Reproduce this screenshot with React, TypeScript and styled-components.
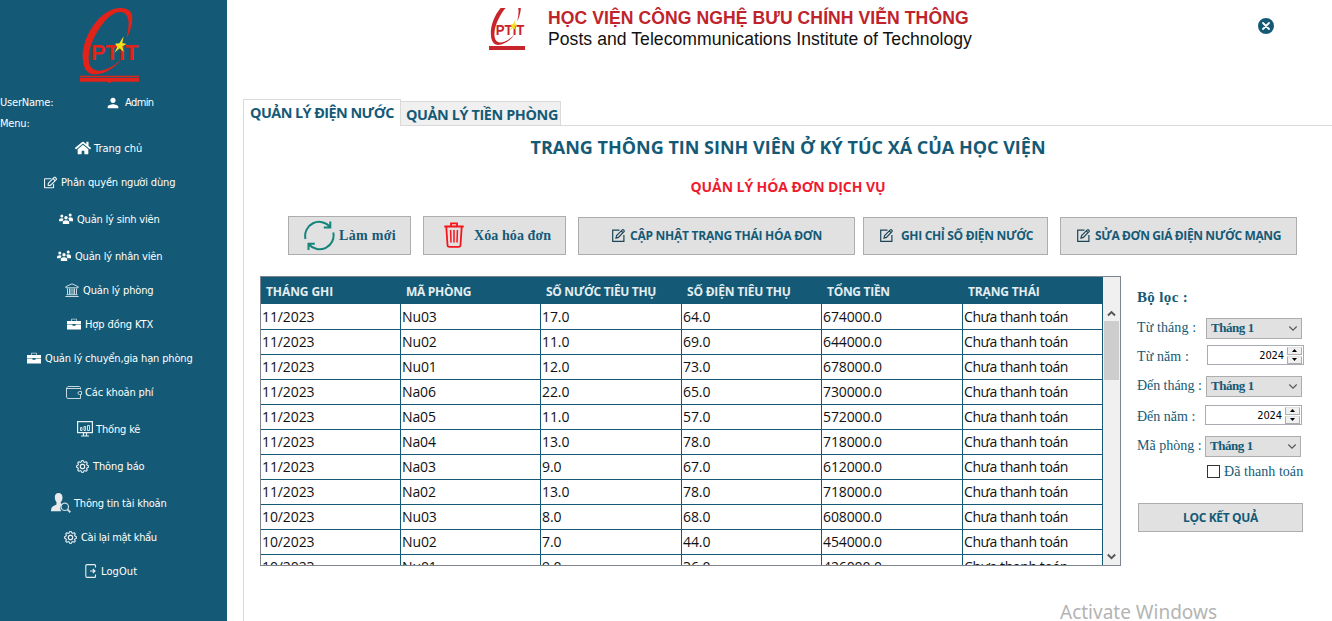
import React from 'react';
import styled, { createGlobalStyle } from 'styled-components';
import { FaHome, FaRegEdit } from 'react-icons/fa';
import { MdPerson } from 'react-icons/md';
import { BsGear } from 'react-icons/bs';

const teal = '#145a76';
const ui = '"Open Sans", "Noto Sans", sans-serif';
const serif = '"Liberation Serif", "Times New Roman", serif';
const condensed = '"DejaVu Sans Condensed", "DejaVu Sans", sans-serif';

const Global = createGlobalStyle`
  * { box-sizing: border-box; }
  body { margin: 0; background: #fff; overflow: hidden; }
  button { margin: 0; border-radius: 0; }
  svg { display: block; flex: none; }
`;

const Page = styled.div`
  display: flex;
  width: 1332px;
  height: 621px;
  overflow: hidden;
`;

const Text = styled.span<{ $ls?: number }>`
  letter-spacing: ${p => p.$ls ?? 0}px;
  white-space: nowrap;
`;

/* ---------- sidebar ---------- */
const Sidebar = styled.aside`
  width: 227px;
  flex: none;
  background: ${teal};
  color: #fff;
  font: 11px/20px ${condensed};
`;

const LogoBox = styled.div`
  height: 92px;
  padding: 7px 0 0 79px;
`;

const UserRow = styled.div`
  display: flex;
  align-items: center;
  height: 22px;
`;

const UserLabel = styled.div`
  width: 105px;
`;

const UserValue = styled.div`
  display: flex;
  align-items: center;
  gap: 4px;
`;

const MenuLabel = styled.div`
  height: 20px;
`;

const NavItem = styled.a<{ $indent: number; $space: number; $gap: number }>`
  display: flex;
  align-items: center;
  height: 30px;
  margin-top: ${p => p.$space}px;
  padding-left: ${p => p.$indent}px;
  gap: ${p => p.$gap}px;

  svg { margin-bottom: 2px; }
`;

/* ---------- main ---------- */
const Main = styled.main`
  flex: 1;
  min-width: 0;
  display: flex;
  flex-direction: column;
  padding-left: 16px;
`;

const Header = styled.header`
  display: flex;
  flex: none;
  align-items: flex-start;
  height: 99px;
  padding: 8px 58px 0 246px;
`;

const Brand = styled.div`
  flex: 1;
  padding-left: 23px;
  font-family: "Liberation Sans", Arial, sans-serif;
  font-size: 17.6px;
  line-height: 21px;
  white-space: nowrap;
`;

const BrandName = styled.div`
  color: #bf242c;
  font-weight: bold;
  letter-spacing: 0.06px;
`;

const BrandSub = styled.div`
  color: #111;
  letter-spacing: 0.04px;
`;

const CloseButton = styled.button`
  padding: 0;
  margin-top: 10px;
  border: 0;
  background: none;
`;

const Tabs = styled.div`
  display: flex;
  flex: none;
  align-items: flex-end;
  height: 27px;
  font: bold 14.4px/20px ${ui};
  color: ${teal};
`;

const Tab = styled.div<{ $active?: boolean }>`
  display: flex;
  align-items: center;
  width: ${p => (p.$active ? 158 : 160)}px;
  height: ${p => (p.$active ? 27 : 25)}px;
  padding-left: ${p => (p.$active ? 6 : 5)}px;
  padding-bottom: ${p => (p.$active ? 1 : 0)}px;
  padding-top: ${p => (p.$active ? 0 : 2)}px;
  background: ${p => (p.$active ? '#fff' : '#f0f0f0')};
  border: 1px solid #d9d9d9;
  border-left-width: ${p => (p.$active ? 1 : 0)}px;
  border-bottom-width: ${p => (p.$active ? 0 : 1)}px;
`;

const TabFill = styled.div`
  flex: 1;
  height: 1px;
  background: #d9d9d9;
`;

const Panel = styled.section`
  flex: 1;
  min-height: 0;
  border-left: 1px solid #d9d9d9;
  padding-top: 8px;
  color: ${teal};
  font-family: ${ui};
`;

const Title = styled.h1`
  margin: 0;
  text-align: center;
  font-size: 18px;
  line-height: 26px;
  white-space: nowrap;
`;

const Subtitle = styled.h2`
  margin: 17px 0 0;
  text-align: center;
  font-size: 14px;
  line-height: 20px;
  letter-spacing: -0.08px;
  color: #ee1c2e;
`;

const Toolbar = styled.div`
  display: flex;
  align-items: flex-end;
  gap: 12px;
  height: 39px;
  margin-top: 19px;
  padding-left: 44px;
`;

const ToolButton = styled.button<{ $w: number; $pad: number; $gap: number; $serif?: boolean; $pull?: number }>`
  display: flex;
  align-items: center;
  width: ${p => p.$w}px;
  height: ${p => (p.$serif ? 39 : 38)}px;
  margin-left: ${p => -(p.$pull ?? 0)}px;
  padding: 0 0 0 ${p => p.$pad}px;
  gap: ${p => p.$gap}px;
  background: #e1e1e1;
  border: 1px solid #adadad;
  color: ${teal};
  font: ${p => (p.$serif ? `bold 14px/20px ${serif}` : `bold 12px/18px ${ui}`)};

  svg { margin-bottom: 1px; }
`;

const Work = styled.div`
  display: flex;
  gap: 16px;
  margin-top: 21px;
  padding-left: 16px;
`;

/* ---------- table ---------- */
const TableFrame = styled.div`
  display: flex;
  width: 861px;
  height: 290px;
  border: 1px solid #7f858f;
  overflow: hidden;
`;

const Grid = styled.div`
  width: 842px;
  height: 288px;
  overflow: hidden;
`;

const GridRow = styled.div<{ $head?: boolean }>`
  display: grid;
  grid-template-columns: 140px 140px 141px 140px 141px 140px;
  height: ${p => (p.$head ? 27 : 25)}px;
  background: ${p => (p.$head ? teal : '#fff')};
`;

const HeadCell = styled.div`
  padding: 2px 0 0 5px;
  color: #e4edf1;
  font: bold 12px/26px ${ui};
`;

const Cell = styled.div`
  padding: 1px 0 0 1px;
  border-right: 1px solid ${teal};
  border-bottom: 1px solid ${teal};
  color: #111;
  font: 14px/24px ${ui};
`;

const ScrollBar = styled.div`
  display: flex;
  flex-direction: column;
  align-items: center;
  width: 17px;
  padding: 33px 0 5px;
  background: #f0f0f0;
`;

const Thumb = styled.div`
  width: 15px;
  height: 59px;
  margin: 4px 0 auto;
  background: #cdcdcd;
`;

/* ---------- filter ---------- */
const Filter = styled.form`
  width: 170px;
  font: 14px/20px ${serif};
`;

const FilterTitle = styled.div`
  height: 42px;
  padding-top: 11px;
  font-size: 15px;
  font-weight: bold;
`;

const Field = styled.div<{ $space: number; $h: number }>`
  display: flex;
  align-items: center;
  height: ${p => p.$h}px;
  margin-top: ${p => p.$space}px;
`;

const FieldLabel = styled.label<{ $w: number; $low?: boolean }>`
  width: ${p => p.$w}px;
  padding-top: ${p => (p.$low ? 3 : 0)}px;
  padding-bottom: ${p => (p.$low ? 0 : 2)}px;
  line-height: 18px;
  white-space: nowrap;
`;

const SelectBox = styled.div`
  display: flex;
  align-items: center;
  justify-content: space-between;
  width: 96px;
  height: 21px;
  padding: 0 3px 1px 4px;
  border: 1px solid #adadad;
  background: #e1e1e1;
  font: bold 13px/18px ${serif};
`;

const Spinner = styled.div`
  display: flex;
  align-items: center;
  justify-content: flex-end;
  width: 97px;
  height: 20px;
  padding-right: 1px;
  border: 1px solid #a8abb2;
  background: #fff;
  color: #000;
  font: 11px/18px ${condensed};
`;

const SpinValue = styled.span`
  padding-top: 1px;
  letter-spacing: -0.1px;
`;

const SpinButtons = styled.div`
  display: flex;
  flex-direction: column;
  gap: 1px;
  margin-left: 3px;
`;

const SpinButton = styled.div`
  display: grid;
  place-items: center;
  width: 15px;
  height: 8px;
  background: #f0f0f0;
  border: 1px solid #adadad;
  border-top-color: #e3e3e3;
`;

const CheckRow = styled.label`
  display: flex;
  align-items: center;
  gap: 4px;
  height: 20px;
  margin: 4px 0 0 70px;
  padding-top: 1px;
  white-space: nowrap;
`;

const CheckBox = styled.span`
  width: 13px;
  height: 13px;
  border: 1px solid #333;
  background: #fff;
`;

const FilterButton = styled.button`
  display: block;
  width: 165px;
  height: 29px;
  margin: 22px 0 0 1px;
  padding: 0;
  border: 1px solid #adadad;
  background: #e1e1e1;
  color: ${teal};
  font: bold 12px/18px ${ui};
`;

const Watermark = styled.div`
  margin: 33px 0 0 816px;
  color: #b4b4b4;
  font: 19px/26px "Noto Sans", sans-serif;
  white-space: nowrap;
`;

/* ---------- drawings ---------- */
function Emblem({ compact }: { compact?: boolean }) {
  const red = compact ? '#c8242b' : '#e2231a';
  return (
    <svg
      width={compact ? 36 : 61}
      height={compact ? 42 : 77}
      viewBox={compact ? '239 56 179 190' : '237 21 183 231'}
      preserveAspectRatio="none"
    >
      <path
        fill={red}
        d="M382 112C406 58 403 24 362 24C300 24 248 110 248 167C248 207 262 223 285 223C315 223 345 202 366 176C340 200 312 213 295 212C270 210 263 190 267 160C274 112 322 36 360 36C390 36 390 74 380 112Z"
      />
      <text
        x="273"
        y="179"
        fontFamily="Liberation Sans, Arial, sans-serif"
        fontWeight="bold"
        fontSize="65"
        textLength="142"
        lengthAdjust="spacingAndGlyphs"
        fill={red}
      >
        PTIT
      </text>
      <path fill="#f1e11d" d="M371 109L367 129L380 132L367 139L371 156L359 145L343 158L352 141L345 131L358 130Z" />
      {compact ? (
        <path fill={red} d="M239 228h179v18h-179z" />
      ) : (
        <path fill={red} d="M240 227h177v4h-177zM240 233h177v12h-82l-7 5-6-5h-82z" />
      )}
    </svg>
  );
}

const People = () => (
  <svg width="14" height="12" viewBox="0 0 14 12" fill="#fff">
    <circle cx="2.8" cy="3" r="1.5" />
    <circle cx="11.2" cy="2" r="1.5" />
    <circle cx="7" cy="4.8" r="1.7" />
    <path d="M0 8.200V6.800Q0 5.200 2.800 5.200q1.300 0 1.700.6L3.600 8.200zM14 8.200V6Q14 4.200 11.200 4.200 9.700 4.200 9.400 5.200L10.400 8.200zM3.800 11V9.200Q3.800 7.200 7 7.200T10.200 9.200V11z" />
  </svg>
);

const Bank = () => (
  <svg width="14" height="15" viewBox="0 0 14 15" fill="none" stroke="#c9dae1">
    <path d="M.8 4.800V3.700L7 .8l6.200 2.900v1.100zM2.500 5.500v6M4.500 5.500v6M6 5.500v6M8 5.500v6M9.500 5.500v6M11.500 5.500v6M1.500 11.700h11M.3 13.500h13.400" />
  </svg>
);

const Briefcase = () => (
  <svg width="14" height="12" viewBox="0 0 14 12" fill="#fff">
    <path d="M4.200 3V.8h5.600V3H9V1.600H5V3z" opacity=".75" />
    <path d="M0 3h14v3.600H8.500v-.5h-3v.5H0zM0 7.100h5.500v.7h3v-.7H14V11.500H0z" />
  </svg>
);

const Wallet = () => (
  <svg width="16" height="14" viewBox="0 0 16 14" fill="none" stroke="#c6d8df">
    <path d="M14.500 4.500V2.500l-1-1H2L.5 3v9l1 1.500h13v-4M.5 3.500h14M15.500 6.500h-2q-1.500 0-1.500 1.500t1.500 1.500h2z" />
  </svg>
);

const Monitor = () => (
  <svg width="16" height="16" viewBox="0 0 16 16" fill="none" stroke="#e8f0f3">
    <path strokeWidth="1.200" d="M.6.6h14.800v11H.6zM6.500 12v2.500M9.500 12v2.500M4 15h8" />
    <path strokeWidth=".9" d="M3.500 6.500h1.500v3H3.500zM7 5.500h1.600v4H7zM10.500 4.500h2v5h-2z" />
  </svg>
);

const PersonSearch = () => (
  <svg width="20" height="20" viewBox="0 0 20 20">
    <path fill="#e8eaeb" d="M7.500 0C10 0 11.500 1.700 11.500 4.500 11.500 6.500 10.800 8 9.800 9v1.500l2 .8Q8.600 13 9.400 16.500L10.300 18.200H0Q0 14 2 13.200L5.500 11.500V9.200Q3.800 7.500 3.800 4.500 3.800 0 7.500 0Z" />
    <g fill="none" stroke="#c9dae1">
      <circle cx="13.800" cy="13.800" r="3.700" strokeWidth="1.200" />
      <path strokeWidth="2" d="M16.600 16.600L19.300 19.300" />
    </g>
  </svg>
);

const SignOut = () => (
  <svg width="12" height="14" viewBox="0 0 12 14" fill="none" stroke="#e8f0f3" strokeWidth="1.100">
    <path d="M10.500 3.500V1.600Q10.500.6 9.500.6H2Q.8.6.8 1.800v10.400q0 1.200 1.200 1.200h7.500q1 0 1-1v-2" />
    <path d="M5 7h5M7.800 5L10 7 7.800 9" />
  </svg>
);

const Refresh = () => (
  <svg width="31" height="31" viewBox="0 0 31 31" fill="none" stroke="#15857c" strokeWidth="2">
    <path d="M1.500 19A14 14 0 0 1 26 7M26.300 1.500v6.100h-6.500M29.300 12.500A14 14 0 0 1 5 24.500M4.500 30v-6.200h6.300" />
  </svg>
);

const Trash = () => (
  <svg width="20" height="26" viewBox="0 0 20 26" fill="none" stroke="#f5151c" strokeWidth="1.800">
    <path d="M.3 4.500h19.400M7 4V1.300h6V4M2.300 5l1.200 18q.1 1.800 1.800 1.800h9.400q1.700 0 1.800-1.800L17.700 5" />
    <path strokeWidth="1.500" d="M6.600 8l.4 12.500M10 8v12.500M13.400 8L13 20.500" />
  </svg>
);

const EditMark = () => (
  <svg width="13" height="13" viewBox="0 0 13 13" fill="none" stroke="#1c4658" strokeWidth="1.200">
    <path d="M7.500 1.100H.7v11.200h11.200V6" />
    <path d="M4 9.100l.6-2.500 5.700-5.700q.8-.5 1.500.2t.2 1.500L6.400 8.400zM9.300 2l1.700 1.700" />
  </svg>
);

const Chevron = ({ up, small }: { up?: boolean; small?: boolean }) => (
  <svg width={small ? 10 : 9} height="7" viewBox="0 0 9 7" fill="none" stroke="#555" strokeWidth={small ? 1.1 : 1.9}>
    <path d={up ? 'M1 5.500L4.500 2 8 5.500' : 'M.8 1.500L4.500 5.200 8.200 1.500'} />
  </svg>
);

const Arrow = ({ up }: { up?: boolean }) => (
  <svg width="5" height="3" viewBox="0 0 5 3"><path d={up ? 'M0 3L2.500 0 5 3z' : 'M0 0L2.500 3 5 0z'} /></svg>
);

/* ---------- data ---------- */
type Nav = [React.ReactNode, string, number, number, number, number];
const nav: Nav[] = [
  [<FaHome size={16} />, 'Trang chủ', 75, 0, 3, 0],
  [<FaRegEdit size={13} color="#eef4f6" />, 'Phân quyền người dùng', 44, 4, 4, -0.15],
  [<People />, 'Quản lý sinh viên', 59, 7, 4, -0.2],
  [<People />, 'Quản lý nhân viên', 57, 7, 4, -0.17],
  [<Bank />, 'Quản lý phòng', 65, 4, 4, -0.16],
  [<Briefcase />, 'Hợp đồng KTX', 67, 4, 4, -0.1],
  [<Briefcase />, 'Quản lý chuyển,gia hạn phòng', 27, 4, 4, -0.15],
  [<Wallet />, 'Các khoản phí', 66, 4, 3, -0.15],
  [<Monitor />, 'Thống kê', 77, 7, 3, -0.15],
  [<BsGear size={13} strokeWidth={0.3} />, 'Thông báo', 76, 7, 4, -0.1],
  [<PersonSearch />, 'Thông tin tài khoản', 51, 7, 3, -0.2],
  [<BsGear size={13} strokeWidth={0.3} />, 'Cài lại mật khẩu', 64, 4, 4, -0.3],
  [<SignOut />, 'LogOut', 85, 4, 4, 0.1],
];

const heads: [string, number][] = [
  ['THÁNG GHI', -0.08], ['MÃ PHÒNG', -0.3], ['SỐ NƯỚC TIÊU THỤ', -0.33],
  ['SỐ ĐIỆN TIÊU THỤ', -0.2], ['TỔNG TIỀN', -0.3], ['TRẠNG THÁI', -0.15],
];

const rows = [
  ['11/2023', 'Nu03', '17.0', '64.0', '674000.0'],
  ['11/2023', 'Nu02', '11.0', '69.0', '644000.0'],
  ['11/2023', 'Nu01', '12.0', '73.0', '678000.0'],
  ['11/2023', 'Na06', '22.0', '65.0', '730000.0'],
  ['11/2023', 'Na05', '11.0', '57.0', '572000.0'],
  ['11/2023', 'Na04', '13.0', '78.0', '718000.0'],
  ['11/2023', 'Na03', '9.0', '67.0', '612000.0'],
  ['11/2023', 'Na02', '13.0', '78.0', '718000.0'],
  ['10/2023', 'Nu03', '8.0', '68.0', '608000.0'],
  ['10/2023', 'Nu02', '7.0', '44.0', '454000.0'],
  ['10/2023', 'Nu01', '9.0', '36.0', '426000.0'],
];

const MonthSelect = () => (
  <SelectBox><Text $ls={-0.45}>Tháng 1</Text><Chevron small /></SelectBox>
);

const YearSpinner = () => (
  <Spinner>
    <SpinValue>2024</SpinValue>
    <SpinButtons>
      <SpinButton><Arrow up /></SpinButton>
      <SpinButton><Arrow /></SpinButton>
    </SpinButtons>
  </Spinner>
);

export default function App() {
  return (
    <Page>
      <Global />
      <Sidebar>
        <LogoBox><Emblem /></LogoBox>
        <UserRow>
          <UserLabel><Text $ls={-0.2}>UserName:</Text></UserLabel>
          <UserValue><MdPerson size={16} /><Text $ls={-0.6}>Admin</Text></UserValue>
        </UserRow>
        <MenuLabel><Text $ls={-0.2}>Menu:</Text></MenuLabel>
        {nav.map(([icon, label, indent, space, gap, ls]) => (
          <NavItem key={label} $indent={indent} $space={space} $gap={gap}>
            {icon}<Text $ls={ls}>{label}</Text>
          </NavItem>
        ))}
      </Sidebar>

      <Main>
        <Header>
          <Emblem compact />
          <Brand>
            <BrandName>HỌC VIỆN CÔNG NGHỆ BƯU CHÍNH VIỄN THÔNG</BrandName>
            <BrandSub>Posts and Telecommunications Institute of Technology</BrandSub>
          </Brand>
          <CloseButton aria-label="Đóng">
            <svg width="16" height="16" viewBox="0 0 16 16">
              <circle cx="8" cy="8" r="8" fill={teal} />
              <path d="M5 5l6 6M11 5l-6 6" stroke="#fff" strokeWidth="1.800" strokeLinecap="round" />
            </svg>
          </CloseButton>
        </Header>

        <Tabs>
          <Tab $active><Text $ls={-0.54}>QUẢN LÝ ĐIỆN NƯỚC</Text></Tab>
          <Tab><Text $ls={-0.38}>QUẢN LÝ TIỀN PHÒNG</Text></Tab>
          <TabFill />
        </Tabs>

        <Panel>
          <Title>TRANG THÔNG TIN SINH VIÊN Ở KÝ TÚC XÁ CỦA HỌC VIỆN</Title>
          <Subtitle>QUẢN LÝ HÓA ĐƠN DỊCH VỤ</Subtitle>
          <Toolbar>
            <ToolButton $w={123} $pad={15} $gap={4} $serif><Refresh /><Text $ls={0.3}>Làm mới</Text></ToolButton>
            <ToolButton $w={143} $pad={20} $gap={10} $serif><Trash /><Text $ls={0.08}>Xóa hóa đơn</Text></ToolButton>
            <ToolButton $w={277} $pad={33} $gap={5}><EditMark /><Text $ls={-0.25}>CẬP NHẬT TRẠNG THÁI HÓA ĐƠN</Text></ToolButton>
            <ToolButton $w={185} $pad={16} $gap={8} $pull={4}><EditMark /><Text $ls={-0.32}>GHI CHỈ SỐ ĐIỆN NƯỚC</Text></ToolButton>
            <ToolButton $w={237} $pad={16} $gap={5}><EditMark /><Text $ls={-0.38}>SỬA ĐƠN GIÁ ĐIỆN NƯỚC MẠNG</Text></ToolButton>
          </Toolbar>

          <Work>
            <TableFrame>
              <Grid>
                <GridRow $head>
                  {heads.map(([h, ls]) => <HeadCell key={h}><Text $ls={ls}>{h}</Text></HeadCell>)}
                </GridRow>
                {rows.map((r, i) => (
                  <GridRow key={i}>
                    {r.map((c, j) => <Cell key={j}><Text $ls={-0.1}>{c}</Text></Cell>)}
                    <Cell><Text $ls={-0.4}>Chưa thanh toán</Text></Cell>
                  </GridRow>
                ))}
              </Grid>
              <ScrollBar>
                <Chevron up />
                <Thumb />
                <Chevron />
              </ScrollBar>
            </TableFrame>

            <Filter>
              <FilterTitle><Text $ls={0.35}>Bộ lọc :</Text></FilterTitle>
              <Field $space={0} $h={21}><FieldLabel $w={69}><Text $ls={0.1}>Từ tháng :</Text></FieldLabel><MonthSelect /></Field>
              <Field $space={6} $h={20}><FieldLabel $w={70} $low><Text $ls={0.1}>Từ năm :</Text></FieldLabel><YearSpinner /></Field>
              <Field $space={11} $h={21}><FieldLabel $w={69}><Text $ls={-0.05}>Đến tháng :</Text></FieldLabel><MonthSelect /></Field>
              <Field $space={8} $h={20}><FieldLabel $w={68} $low>Đến năm :</FieldLabel><YearSpinner /></Field>
              <Field $space={11} $h={21}><FieldLabel $w={68}>Mã phòng :</FieldLabel><MonthSelect /></Field>
              <CheckRow><CheckBox /><Text $ls={0.05}>Đã thanh toán</Text></CheckRow>
              <FilterButton type="button"><Text $ls={-0.35}>LỌC KẾT QUẢ</Text></FilterButton>
            </Filter>
          </Work>
          <Watermark>Activate Windows</Watermark>
        </Panel>
      </Main>
    </Page>
  );
}
